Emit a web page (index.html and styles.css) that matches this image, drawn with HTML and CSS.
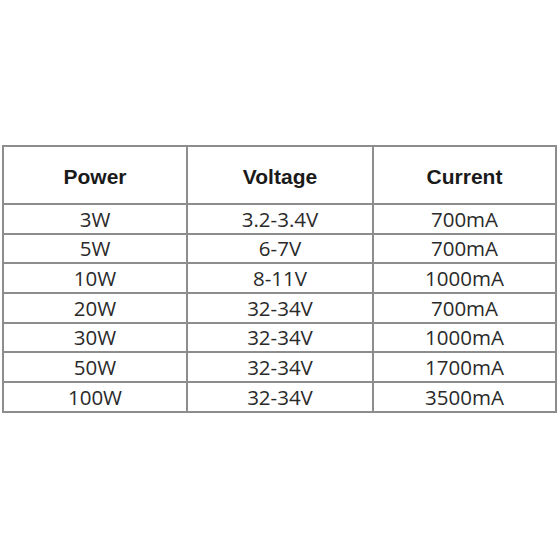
FILE: index.html
```html
<!DOCTYPE html>
<html>
<head>
<meta charset="utf-8">
<link rel="stylesheet" href="styles.css">
</head>
<body>
<div class="page">
  <div class="spec">
    <div class="cell head">Power</div>
    <div class="cell head">Voltage</div>
    <div class="cell head">Current</div>
    <div class="cell">3W</div><div class="cell">3.2-3.4V</div><div class="cell">700mA</div>
    <div class="cell">5W</div><div class="cell">6-7V</div><div class="cell">700mA</div>
    <div class="cell">10W</div><div class="cell">8-11V</div><div class="cell">1000mA</div>
    <div class="cell">20W</div><div class="cell">32-34V</div><div class="cell">700mA</div>
    <div class="cell">30W</div><div class="cell">32-34V</div><div class="cell">1000mA</div>
    <div class="cell">50W</div><div class="cell">32-34V</div><div class="cell">1700mA</div>
    <div class="cell">100W</div><div class="cell">32-34V</div><div class="cell">3500mA</div>
  </div>
</div>
</body>
</html>
```

FILE: styles.css
```css
html, body {
  margin: 0;
  padding: 0;
  background: #fff;
}
.page {
  width: 560px;
  height: 560px;
  padding: 145px 0 0 2px;
  box-sizing: border-box;
}
.spec {
  display: grid;
  grid-template-columns: 182px 184px 181px;
  grid-template-rows: 56px repeat(7, 27.7px);
  gap: 2px;
  padding: 2px;
  width: max-content;
  background: #8d8d8d;
}
.cell {
  background: #fff;
  display: flex;
  align-items: center;
  justify-content: center;
  font-family: "Open Sans", "Liberation Sans", sans-serif;
  font-size: 20.5px;
  color: #2a2a2a;
  line-height: 1;
}
.head {
  font-family: "Liberation Sans", Arial, sans-serif;
  font-weight: bold;
  font-size: 21px;
  color: #1a1a1a;
  padding-top: 2px;
}
```
